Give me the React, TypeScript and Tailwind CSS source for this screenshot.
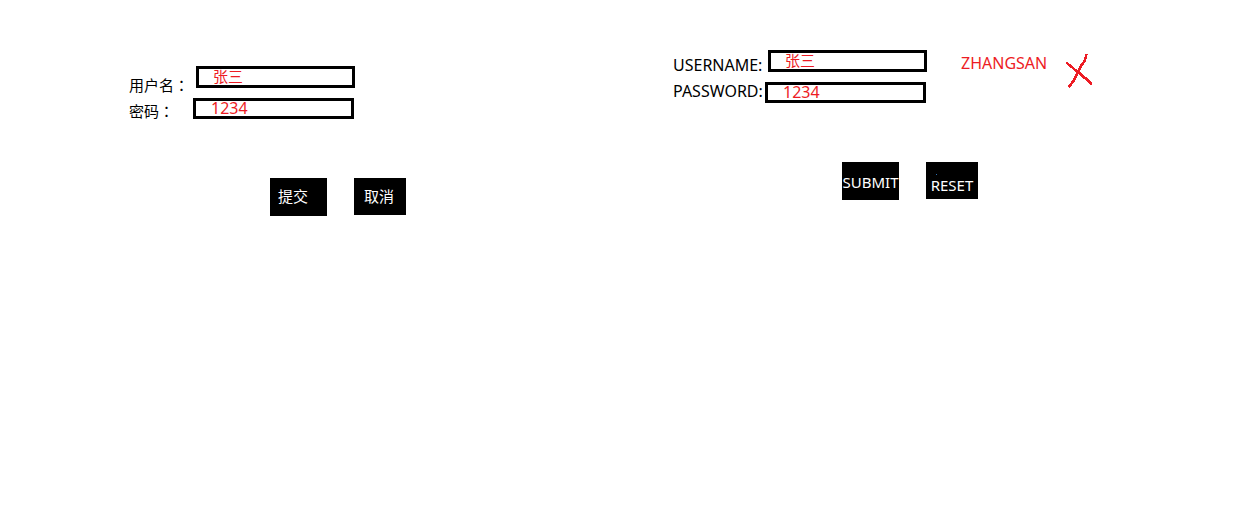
import { useId, type ReactNode } from "react";

type LoginFormProps = {
  userLabel: ReactNode;
  passwordLabel: ReactNode;
  labelsClass: string;
  actionsClass: string;
  submit: ReactNode;
  reset: ReactNode;
  note?: ReactNode;
};

const inputClass = "border-3 border-black bg-white p-0 pb-0.5 text-[#ed1c24] outline-none";

function LoginForm({ userLabel, passwordLabel, labelsClass, actionsClass, submit, reset, note }: LoginFormProps) {
  const id = useId();
  return (
    <form onSubmit={(e) => e.preventDefault()}>
      <div className="flex items-start">
        <div className={`flex shrink-0 flex-col whitespace-nowrap leading-[26px] ${labelsClass}`}>
          <label htmlFor={`${id}-user`}>{userLabel}</label>
          <label htmlFor={`${id}-password`}>{passwordLabel}</label>
        </div>
        <div className="flex shrink-0 flex-col items-start gap-2.5">
          <input id={`${id}-user`} type="text" defaultValue="张三" className={`${inputClass} ml-[3px] h-[22px] w-[159px] pl-3.5 text-[15px]`} />
          <input id={`${id}-password`} type="text" defaultValue="1234" className={`${inputClass} h-[21px] w-[161px] pl-[15px] text-base`} />
        </div>
        {note}
      </div>
      <div className={`flex items-start gap-[27px] ${actionsClass}`}>
        {submit}
        {reset}
      </div>
    </form>
  );
}

function Colon() {
  return <span className="font-['Noto_Sans_CJK_TC',sans-serif]">：</span>;
}

function RedCross() {
  return (
    <svg viewBox="0 0 28 34" className="h-[34px] w-7 shrink-0" fill="none" stroke="#ed1c24" strokeWidth="2.6" strokeLinejoin="round" shapeRendering="crispEdges" aria-hidden="true">
      <path d="M22.5 0L21.5 4L20 8L17 12L15.5 15L14 18L12 22L10 26L8 29L4.5 33" />
      <path d="M2.5 8.5L5 11L8 13L11 16L14 18L17 20L19 23L23 25L25 28L28 30" />
    </svg>
  );
}

export default function App() {
  return (
    <main className="grid min-h-screen grid-cols-2 items-start bg-white font-['Noto_Sans','Noto_Sans_CJK_SC',sans-serif] text-[15px] text-black">
      <section className="pt-[66px] pl-[129px]">
        <LoginForm
          userLabel={<>用户名<Colon /></>}
          passwordLabel={<>密码<Colon /></>}
          labelsClass="w-16 pt-1.5"
          actionsClass="mt-[54px] pl-[141px]"
          submit={<button type="submit" className="h-[38px] w-[57px] bg-black pb-0.5 pl-2 text-left text-white">提交</button>}
          reset={<button type="reset" className="h-[37px] w-[52px] bg-black pr-0.5 text-center text-white">取消</button>}
        />
      </section>
      <section className="pt-[50px] pl-[52px]">
        <LoginForm
          userLabel="USERNAME:"
          passwordLabel="PASSWORD:"
          labelsClass="w-[92px] pt-[2px] text-base leading-[26px]"
          actionsClass="mt-[58px] pl-[169px]"
          submit={<button type="submit" className="h-[38px] w-[57px] bg-black pt-0.5 text-center whitespace-nowrap text-white">SUBMIT</button>}
          reset={
            <button type="reset" className="relative h-[37px] w-[52px] bg-black pt-2.5 text-center whitespace-nowrap text-white">
              <span className="absolute top-3 left-2.5 size-px bg-[#2f6fb0]" />
              RESET
            </button>
          }
          note={
            <div className="flex items-start gap-[17px] pl-[34px] text-base text-[#ed1c24]">
              <span className="leading-[26px]">ZHANGSAN</span>
              <div className="pt-1">
                <RedCross />
              </div>
            </div>
          }
        />
      </section>
    </main>
  );
}
